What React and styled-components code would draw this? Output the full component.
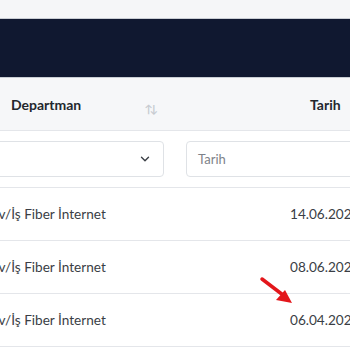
import React from 'react'
import styled, { createGlobalStyle } from 'styled-components'

const GlobalStyle = createGlobalStyle`
  body {
    margin: 0;
    background: #fff;
    font-family: Lato, "Open Sans", sans-serif;
    color: #2b2f36;
  }
`

const Page = styled.div`
  position: relative;
  width: 350px;
  height: 350px;
  overflow: hidden;
`

const TopStrip = styled.div`
  height: 18px;
  background: #f5f6f8;
  border-bottom: 1px solid #c9cdd4;
`

const NavBand = styled.div`
  height: 58px;
  background: #101830;
  border-bottom: 1px solid #c9cdd4;
`

const Table = styled.div`
  width: 440px;
  margin-left: -30px;
`

const Row = styled.div`
  display: grid;
  grid-template-columns: 204px 1fr;
  align-items: center;
  height: ${p => p.$h}px;
  background: ${p => (p.$head ? '#f6f7f9' : '#fff')};
  border-bottom: 1px solid #e4e6ea;
`

const HeadCell = styled.div`
  display: flex;
  align-items: center;
  padding-left: ${p => p.$pl}px;
  font-size: 14px;
  font-weight: 700;
  color: #23272e;
`

const SortIcon = styled.span`
  margin-left: 63px;
  margin-top: 9px;
  font-size: 11px;
  letter-spacing: -3px;
  color: #c7cbd1;
`

const FilterBox = styled.div`
  display: flex;
  align-items: center;
  justify-content: space-between;
  box-sizing: border-box;
  height: 36px;
  margin-left: ${p => p.$ml}px;
  margin-right: ${p => p.$mr}px;
  padding: 0 11px;
  border: 1px solid #dfe2e6;
  border-radius: 4px;
  background: #fff;
  font-size: 13px;
  color: #7d8289;
`

const Cell = styled.div`
  padding-left: ${p => p.$pl}px;
  font-size: 13.6px;
  color: #3a3e45;
  white-space: nowrap;
`

const Arrow = styled.svg`
  position: absolute;
  left: 255px;
  top: 272px;
`

const rows = [
  { dept: 'Ev/İş Fiber İnternet', date: '14.06.2023' },
  { dept: 'Ev/İş Fiber İnternet', date: '08.06.2023' },
  { dept: 'Ev/İş Fiber İnternet', date: '06.04.2023' },
]

export default function App() {
  return (
    <>
      <GlobalStyle />
      <Page>
        <TopStrip />
        <NavBand />
        <Table>
          <Row $head $h={52}>
            <HeadCell $pl={41}>
              Departman
              <SortIcon>↑↓</SortIcon>
            </HeadCell>
            <HeadCell $pl={136}>Tarih</HeadCell>
          </Row>
          <Row $h={56}>
            <FilterBox $ml={0} $mr={10}>
              <span />
              <svg width="14" height="14" viewBox="0 0 24 24" fill="none" stroke="#3a3e45" strokeWidth="2.4" strokeLinecap="round" strokeLinejoin="round">
                <path d="M6 9l6 6 6-6" />
              </svg>
            </FilterBox>
            <FilterBox $ml={12} $mr={-40}>Tarih</FilterBox>
          </Row>
          {rows.map((r, i) => (
            <Row key={i} $h={52}>
              <Cell $pl={21}>{r.dept}</Cell>
              <Cell $pl={116}>{r.date}</Cell>
            </Row>
          ))}
        </Table>
        <Arrow width="45" height="40" viewBox="0 0 45 40">
          <path d="M7 7 L28 23" stroke="#e3161b" strokeWidth="3.5" strokeLinecap="round" />
          <path d="M37 31 L21 28 L30 18 Z" fill="#e3161b" />
        </Arrow>
      </Page>
    </>
  )
}
